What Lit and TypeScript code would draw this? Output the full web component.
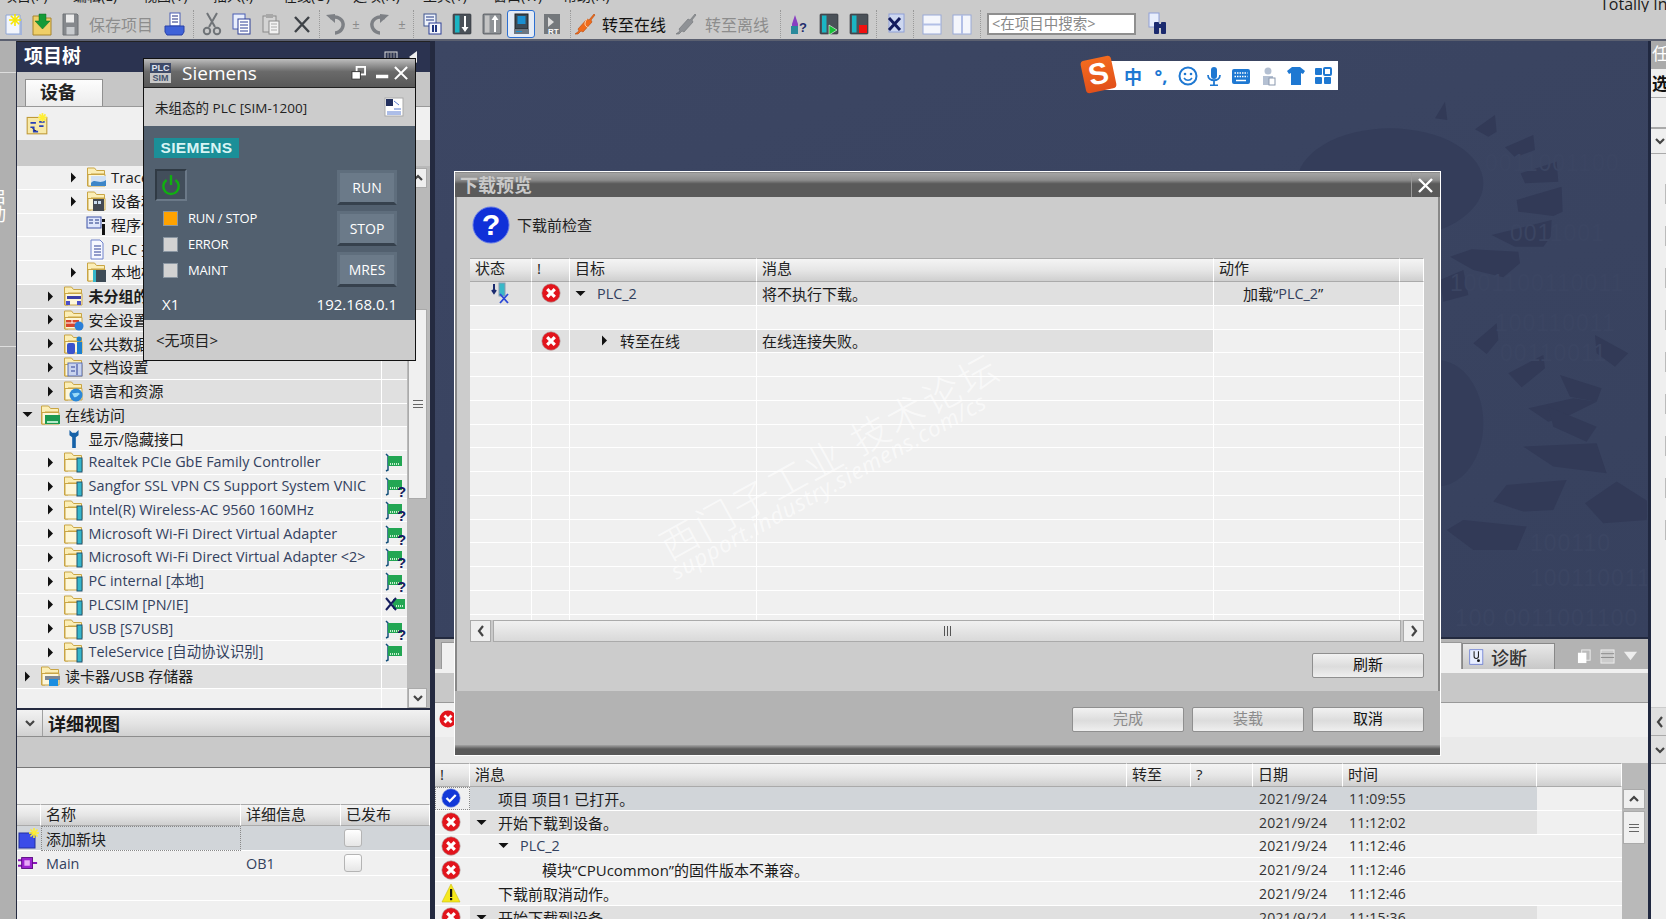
import { LitElement, html, css, svg } from "lit";
import { customElement } from "lit/decorators.js";

const ic = (c: any, s = 24, vb = 24) =>
  html`<svg width=${s} height=${s} viewBox="0 0 ${vb} ${vb}">${c}</svg>`;

const star = (x: number, y: number, r = 5, col = "#ffee33") => svg`
  <g stroke=${col} stroke-width="1.6">
    <line x1=${x - r} y1=${y} x2=${x + r} y2=${y} />
    <line x1=${x} y1=${y - r} x2=${x} y2=${y + r} />
    <line x1=${x - r * 0.7} y1=${y - r * 0.7} x2=${x + r * 0.7} y2=${y + r * 0.7} />
    <line x1=${x - r * 0.7} y1=${y + r * 0.7} x2=${x + r * 0.7} y2=${y - r * 0.7} />
  </g>`;

const device = (screen: string, body = "#4a5158") => svg`
  <rect x="3" y="2" width="18" height="20" rx="1" fill=${body} stroke="#2c3138" stroke-width=".6"/>
  <rect x="5" y="3.5" width="4.500" height="17" fill=${screen}/>`;

const tb = {
  new: ic(svg`<path d="M4 3h14v19H4z" fill="#f2f5fc" stroke="#8fa6d4"/><path d="M18 6l2 1v16H6v-1h12z" fill="#a3b4da"/>${star(13, 8, 6, "#f5e600")}`),
  open: ic(svg`<path d="M3 4h7l2 2h9v17H3z" fill="#efcf68" stroke="#a8862e"/><path d="M9 2h7v7h4l-7.500 8L5 9h4z" fill="#149a38" stroke="#0c6b22" stroke-width=".5"/>`),
  save: ic(svg`<path d="M5 2h14l1 1v20H5z" fill="#85888c" stroke="#6e7276"/><rect x="8" y="2.500" width="8" height="8" fill="#ececec"/><rect x="8.500" y="15" width="8" height="7.500" fill="#c9cccf"/>`),
  print: ic(svg`<rect x="8" y="1" width="10" height="13" fill="#fff" stroke="#4a5fb5"/><path d="M10 4h6M10 7h6M10 10h6" stroke="#1e2d80"/><path d="M3 14h19v6l-2 3H5l-2-3z" fill="#3f62d8" stroke="#2941a8"/>`),
  cut: ic(svg`<g fill="none" stroke="#707478" stroke-width="2"><path d="M7 1l8 14M17 1L9 15"/><circle cx="7" cy="19" r="3.200"/><circle cx="17" cy="19" r="3.200"/></g>`),
  copy: ic(svg`<rect x="3" y="2" width="12" height="15" fill="#e8eefc" stroke="#4a5fb5"/><rect x="8" y="7" width="12" height="15" fill="#fff" stroke="#2d3f95"/><path d="M10 10h8M10 13h8M10 16h8M10 19h8" stroke="#2d3f95"/>`),
  paste: ic(svg`<rect x="4" y="4" width="13" height="16" fill="#d4d4d4" stroke="#8a8a8a"/><rect x="7" y="2" width="7" height="4" fill="#a8a8a8"/><rect x="10" y="9" width="10" height="13" fill="#f2f2f2" stroke="#8a8a8a"/><path d="M12 12h6M12 15h6M12 18h6" stroke="#aaa"/>`),
  del: ic(svg`<path d="M5 5l14 15M19 5L5 20" stroke="#3e4247" stroke-width="2.400" fill="none"/>`),
  undo: ic(svg`<path d="M6 6c8-3 14 2 13 8s-7 7-8 7" stroke="#7d8085" stroke-width="3.400" fill="none"/><path d="M2 3l9-1v9z" fill="#7d8085"/>`),
  redo: ic(svg`<path d="M18 6c-8-3-14 2-13 8s7 7 8 7" stroke="#7d8085" stroke-width="3.400" fill="none"/><path d="M22 3l-9-1v9z" fill="#7d8085"/>`),
  dl0: ic(svg`<rect x="4" y="2" width="12" height="12" fill="#eef3fb" stroke="#41568f"/><path d="M6 5h8M6 8h8" stroke="#1f3580"/><rect x="9" y="11" width="12" height="11" fill="#f4f6fb" stroke="#2d3f95"/><rect x="12" y="13" width="2" height="7" fill="#1f3580"/><rect x="15" y="13" width="2" height="7" fill="#1f3580"/>`),
  dl: ic(svg`${device("#1bb5c4")}<path d="M14 4v11h-2.500l3.500 5 3.500-5H16V4z" fill="#fff"/>`),
  ul: ic(svg`${device("#c4c4c4", "#8e9296")}<path d="M15 3l-3.500 5H14v12h2V8h2.500z" fill="#fff"/>`),
  sel: ic(svg`<rect x="6" y="2" width="13" height="15" fill="#3b4a57" stroke="#222"/><rect x="8.500" y="4" width="8" height="8" fill="#1a8fd0"/><rect x="5" y="17" width="15" height="5" fill="#6c7680"/><rect x="7" y="19" width="6" height="1" fill="#1a8fd0"/>`),
  rt: ic(svg`<rect x="4" y="2" width="16" height="20" fill="#74787c"/><path d="M8 5l6 5-6 5z" fill="#dcdcdc"/><text x="8" y="21.500" font-size="8" font-weight="700" fill="#fff" font-family="Liberation Sans">RT</text>`),
  on: ic(svg`<path d="M21 2l-5 6-2-1-9 10 1 2-4 3 3 0 3-3 2 1 9-10-1-2 4-5z" fill="#f06b1c" stroke="#b84a0a" stroke-width=".6"/><path d="M14 7c-3 4-3 7 2 9" stroke="#ffd9b8" fill="none"/>`),
  off: ic(svg`<path d="M21 2l-5 6-2-1-9 10 1 2-4 3 3 0 3-3 2 1 9-10-1-2 4-5z" fill="#8f9296" stroke="#6e7276" stroke-width=".6"/>`),
  acc: ic(svg`<path d="M5 12l3-9 3 9v9H5z" fill="#8a3fc2"/><rect x="4" y="14" width="7" height="8" fill="#2a8a9c"/><text x="12" y="20" font-size="13" font-weight="700" fill="#1f2d6b" font-family="Liberation Sans">?</text>`),
  m1: ic(svg`${device("#1bb5c4")}<path d="M12 13l8 5-8 5z" fill="#18c038" stroke="#fff" stroke-width=".6"/>`),
  m2: ic(svg`${device("#1bb5c4")}<rect x="12" y="13" width="8" height="8" fill="#f01010"/>`),
  xx: ic(svg`<rect x="6" y="2" width="15" height="18" fill="#cdd7f0" stroke="#8fa0d8"/><path d="M6 6l11 12M17 6L6 18" stroke="#141c5e" stroke-width="3"/>`),
  split1: ic(svg`<rect x="4" y="3" width="18" height="19" fill="#f4f6fc" stroke="#9aaad8"/><rect x="4" y="11.500" width="18" height="2" fill="#b2bfe6"/>`),
  split2: ic(svg`<rect x="3" y="3" width="18" height="19" fill="#f4f6fc" stroke="#9aaad8"/><rect x="11" y="3" width="2" height="19" fill="#b2bfe6"/>`),
  find: ic(svg`<rect x="3" y="1" width="10" height="14" fill="#e8eefc" stroke="#8fa0d8"/><rect x="8" y="10" width="5" height="12" rx="1" fill="#1b2a6e"/><rect x="15" y="10" width="5" height="12" rx="1" fill="#1b2a6e"/><rect x="12" y="12" width="4" height="4" fill="#1b2a6e"/>`),
};

type TbItem = { w: number; i?: any; t?: string; dis?: boolean; sep?: boolean; sel?: boolean; pm?: boolean; search?: boolean };
const toolbar: TbItem[] = [
  { w: 28, i: tb.new }, { w: 28, i: tb.open }, { w: 28, i: tb.save },
  { w: 73, t: "保存项目", dis: true }, { w: 34, i: tb.print }, { w: 4, sep: true },
  { w: 34, i: tb.cut }, { w: 25, i: tb.copy }, { w: 34, i: tb.paste }, { w: 28, i: tb.del }, { w: 6, sep: true },
  { w: 28, i: tb.undo }, { w: 12, pm: true }, { w: 34, i: tb.redo }, { w: 12, pm: true }, { w: 10, sep: true },
  { w: 28, i: tb.dl0 }, { w: 32, i: tb.dl }, { w: 28, i: tb.ul }, { w: 30, i: tb.sel, sel: true }, { w: 31, i: tb.rt }, { w: 6, sep: true },
  { w: 24, i: tb.on }, { w: 75, t: "转至在线" }, { w: 28, i: tb.off }, { w: 75, t: "转至离线", dis: true }, { w: 10, sep: true },
  { w: 28, i: tb.acc }, { w: 32, i: tb.m1 }, { w: 28, i: tb.m2 }, { w: 7, sep: true },
  { w: 30, i: tb.xx }, { w: 6, sep: true }, { w: 30, i: tb.split1 }, { w: 32, i: tb.split2 }, { w: 4, sep: true },
  { w: 154, search: true }, { w: 44, i: tb.find },
];

const folder = (over: any) => ic(svg`
  <path d="M1.500 20V2h7l2 2.500h8V8H5v12z" fill="#fbeeb6" stroke="#c9a544"/>
  <path d="M2 20V8.500h17V20z" fill="#fdf7da" stroke="#c9a544"/>${over}`, 22, 22);
const ifFolder = folder(svg`<rect x="14" y="7" width="5" height="14" fill="#35b6c9" stroke="#20526e"/>`);

const tree: { lv: number; arrow?: "r" | "d"; icon: any; label: string; shade?: boolean; bold?: boolean; st?: string; lat?: boolean }[] = [
  { lv: 2, arrow: "r", icon: folder(svg`<rect x="5" y="10" width="15" height="10" fill="#cfe0f5"/><path d="M5 17c4-5 8 2 15-3v6H5z" fill="#3d86c8"/>`), label: "Trace" },
  { lv: 2, arrow: "r", icon: folder(svg`<rect x="7" y="9" width="11" height="12" fill="#444a52"/><rect x="8" y="11" width="3" height="3" fill="#cde"/><rect x="12" y="11" width="3" height="3" fill="#cde"/>`), label: "设备和网络" },
  { lv: 2, icon: ic(svg`<rect x="1" y="3" width="14" height="11" fill="#dfe6fb" stroke="#3d52a8"/><path d="M3 6h4M3 9h4M9 6h4M9 9h4" stroke="#1f3580"/><rect x="16" y="5" width="3" height="3" fill="#111"/><rect x="16" y="10" width="3" height="11" fill="#111"/>`, 22, 22), label: "程序信息" },
  { lv: 2, icon: ic(svg`<path d="M5 2h9l3 3v16H5z" fill="#f6f8ff" stroke="#6e82cc"/><path d="M8 8h7M8 11h7M8 14h7M8 17h7" stroke="#2d3f95"/>`, 22, 22), label: "PLC 报警文本列表" },
  { lv: 2, arrow: "r", icon: folder(svg`<rect x="9" y="9" width="11" height="12" fill="#3d4a55"/><rect x="7" y="9" width="3" height="12" fill="#35b6c9"/>`), label: "本地模块" },
  { lv: 1, arrow: "r", shade: true, bold: true, icon: folder(svg`<rect x="4" y="11" width="14" height="3" fill="#3b3fa8"/><rect x="3" y="16" width="4" height="4" fill="#4b4fc8"/><rect x="14" y="16" width="4" height="4" fill="#4b4fc8"/>`), label: "未分组的设备" },
  { lv: 1, arrow: "r", shade: true, icon: folder(svg`<rect x="3" y="11" width="13" height="7" fill="#d8452a"/><path d="M3 14h13M9 11v3" stroke="#fff"/><circle cx="16" cy="17" r="4.500" fill="#2a7ed8"/>`), label: "安全设置" },
  { lv: 1, arrow: "r", shade: true, icon: folder(svg`<rect x="4" y="10" width="8" height="11" rx="2" fill="#3a52cc"/><circle cx="16" cy="6" r="2.500" fill="#1b7fcf"/><rect x="14" y="9" width="5" height="12" fill="#1b7fcf"/>`), label: "公共数据" },
  { lv: 1, arrow: "r", shade: true, icon: folder(svg`<rect x="5" y="7" width="14" height="13" fill="#c9d4ee" stroke="#5a6fb5"/><path d="M8 11h4M8 15h4M14 8v11" stroke="#2d3f95"/>`), label: "文档设置" },
  { lv: 1, arrow: "r", shade: true, icon: folder(svg`<circle cx="13" cy="15" r="6.500" fill="#2a88d8"/><path d="M9 13c3 1 6-2 8 1-2 1-3 4-6 3z" fill="#9adbf8"/>`), label: "语言和资源" },
  { lv: 0, arrow: "d", shade: true, icon: folder(svg`<rect x="5" y="11" width="15" height="9" fill="#1c9950"/><rect x="7" y="17" width="11" height="2" fill="#b5e8c8"/>`), label: "在线访问" },
  { lv: 1, icon: ic(svg`<path d="M6 1v6l3 2v12h4V9l3-2V1l-3 3h-4z" fill="#1662a8"/>`, 20, 22), label: "显示/隐藏接口" },
  { lv: 1, arrow: "r", icon: ifFolder, label: "Realtek PCIe GbE Family Controller", st: "n", lat: true },
  { lv: 1, arrow: "r", icon: ifFolder, label: "Sangfor SSL VPN CS Support System VNIC", st: "q", lat: true },
  { lv: 1, arrow: "r", icon: ifFolder, label: "Intel(R) Wireless-AC 9560 160MHz", st: "q", lat: true },
  { lv: 1, arrow: "r", icon: ifFolder, label: "Microsoft Wi-Fi Direct Virtual Adapter", st: "q", lat: true },
  { lv: 1, arrow: "r", icon: ifFolder, label: "Microsoft Wi-Fi Direct Virtual Adapter <2>", st: "q", lat: true },
  { lv: 1, arrow: "r", icon: ifFolder, label: "PC internal [本地]", st: "q", lat: true },
  { lv: 1, arrow: "r", icon: ifFolder, label: "PLCSIM [PN/IE]", st: "x", lat: true },
  { lv: 1, arrow: "r", icon: ifFolder, label: "USB [S7USB]", st: "q", lat: true },
  { lv: 1, arrow: "r", icon: ifFolder, label: "TeleService [自动协议识别]", st: "n", lat: true },
  { lv: 0, arrow: "r", shade: true, icon: folder(svg`<rect x="5" y="11" width="15" height="4" fill="#7d8794"/><rect x="9" y="14" width="9" height="7" fill="#1b8ee0"/>`), label: "读卡器/USB 存储器" },
  { lv: 0, icon: "", label: "" },
];

const nic = (q: boolean) => ic(svg`<path d="M2 3l2 2v14l-2 1" stroke="#14507a" fill="none" stroke-width="1.500"/><rect x="4" y="5" width="14" height="10" fill="#22a653"/><path d="M6 13h9" stroke="#c8f0d0" stroke-width="2" stroke-dasharray="1 1"/>${q ? svg`<text x="13" y="22" font-size="15" font-weight="700" fill="#141c5e" font-family="Liberation Sans">?</text>` : ""}`, 22, 22);
const nicX = ic(svg`<rect x="9" y="5" width="12" height="10" fill="#22a653"/><path d="M12 12h7" stroke="#c8f0d0" stroke-width="2" stroke-dasharray="1 1"/><path d="M2 4l10 12M12 4L2 16" stroke="#141c5e" stroke-width="2"/>`, 22, 22);

const rightArrow = html`<svg width="7" height="11" viewBox="0 0 7 11"><path d="M1 .5l5 5-5 5z" fill="#111"/></svg>`;
const downArrow = html`<svg width="11" height="7" viewBox="0 0 11 7"><path d="M.5 1h10l-5 5z" fill="#111"/></svg>`;
const chev = (d: string) => html`<svg width="12" height="12" viewBox="0 0 12 12"><path d=${d} stroke="#444" stroke-width="2.200" fill="none"/></svg>`;
const CUP = "M2 8l4-4 4 4", CDOWN = "M2 4l4 4 4-4", CLEFT = "M8 1L4 6l4 5", CRIGHT = "M4 1l4 5-4 5";

const err = ic(svg`<circle cx="10" cy="10" r="9.200" fill="#e2141c" stroke="#a8a0a0" stroke-width=".6"/><path d="M6.200 6.200l7.600 7.600M13.800 6.200l-7.600 7.600" stroke="#fff" stroke-width="3.200"/>`, 20, 20);
const ok = ic(svg`<circle cx="10" cy="10" r="9.200" fill="#1238d8" stroke="#8a98d8" stroke-width=".6"/><path d="M5.500 10l3.200 3.200 6-6.200" stroke="#fff" stroke-width="2.300" fill="none"/>`, 20, 20);
const warn = ic(svg`<path d="M10 1l9 18H1z" fill="#f6e81e" stroke="#c8bc10" stroke-width=".6"/><rect x="9" y="6" width="2.200" height="8" fill="#111"/><rect x="9" y="15" width="2.200" height="2.200" fill="#111"/>`, 20, 20);

const logRows: { icon: any; lv: number; arrow?: boolean; msg: string; lat?: boolean; t: string; cls: string }[] = [
  { icon: ok, lv: 0, msg: "项目 项目1 已打开。", t: "11:09:55", cls: "sel" },
  { icon: err, lv: 0, arrow: true, msg: "开始下载到设备。", t: "11:12:02", cls: "shade" },
  { icon: err, lv: 1, arrow: true, msg: "PLC_2", lat: true, t: "11:12:46", cls: "" },
  { icon: err, lv: 2, msg: "模块“CPUcommon”的固件版本不兼容。", t: "11:12:46", cls: "" },
  { icon: warn, lv: 0, msg: "下载前取消动作。", t: "11:12:46", cls: "" },
  { icon: err, lv: 0, arrow: true, msg: "开始下载到设备。", t: "11:15:36", cls: "shade" },
];

const gearTeeth = [
  "285,235 315,185 322,240", "405,268 465,225 470,275 445,290", "495,322 580,285 585,330 525,352",
  "542,400 650,365 655,425 555,430", "530,480 665,440 668,515 640,528 535,515", "455,585 635,540 632,590 610,620 525,620",
  "330,650 395,628 535,635 540,670 490,712 400,690", "300,720 370,690 385,765 310,785",
  "400,910 470,850 475,900 440,942", "505,1000 610,945 615,985 545,1042", "565,1105 700,1075 770,1085 690,1125 625,1145",
  "660,1005 785,1045 770,1085 690,1070", "765,885 865,940 825,980 770,940", "625,1100 770,1160 740,1205 640,1160",
  "550,1220 770,1210 800,1300 640,1280", "460,1385 500,1335 680,1320 640,1410 550,1415",
  "735,1390 830,1325 925,1385 920,1440 790,1450", "320,1470 370,1440 560,1460 530,1530 400,1530",
];

@customElement("app-root")
export class AppRoot extends LitElement {
  static styles = css`
    :host { display: block; width: 1666px; height: 919px; overflow: hidden; position: relative;
      font-family: "Open Sans", "Noto Sans CJK SC", sans-serif; font-size: 15px; color: #1c1c1c; }
    * { box-sizing: border-box; }
    svg { display: block; flex: none; }
    .app { display: flex; flex-direction: column; height: 919px; background: #ccc; }

    .top { height: 41px; flex: none; background: #cbcbcb; border-bottom: 2px solid #5b6070; overflow: hidden; }
    .menu { height: 12px; display: flex; overflow: hidden; position: relative; padding-left: 3px; }
    .menu span { width: 70px; font-size: 14px; line-height: 16px; margin-top: -12px; flex: none; }
    .menu .taia { margin-left: auto; width: 66px; font-size: 16px; line-height: 20px; margin-top: -6px; white-space: nowrap; overflow: hidden; }
    .bar { display: flex; align-items: center; height: 31px; margin-top: -4px; }
    .ti { display: flex; align-items: center; justify-content: center; flex: none; height: 30px; }
    .ti.txt { font-size: 16px; justify-content: flex-start; padding-left: 5px; white-space: nowrap; color: #111; }
    .ti.dis { color: #8d8d8d; }
    .ti.sep::after { content: ""; height: 28px; border-left: 1px dotted #9a9a9a; }
    .ti.sel svg { border: 1px solid #2c6fd1; background: #e4ebf5; border-radius: 3px; box-sizing: content-box; padding: 1px; }
    .ti.pm { color: #8a8a8a; font-size: 13px; }
    .search { width: 149px; height: 22px; border: 2px solid #8f8f8f; background: #fff; font-size: 14.500px; line-height: 17px;
      padding-left: 3px; color: #888; margin-left: 5px; flex: none; white-space: nowrap; overflow: hidden; }

    .main { flex: 1; display: flex; min-height: 0; }
    .lstrip { width: 16px; flex: none; background: #b0b0b0; padding-top: 31px; overflow: hidden; }
    .ltab { height: 275px; border-top: 1px solid #ddd; border-bottom: 1px solid #ddd; padding-top: 114px; }
    .ltab span { writing-mode: vertical-rl; color: #fff; font-size: 18px; margin-left: -17px; display: block; }

    .left { width: 419px; flex: none; background: #242a40; padding: 0 5px 0 1px; display: flex; flex-direction: column; }
    .treehead { height: 31px; flex: none; background: #2b3350; color: #fff; font-size: 19px; font-weight: 700;
      padding-left: 7px; line-height: 29px; display: flex; border-top: 1px solid #222; }
    .treehead .tools { margin-left: auto; display: flex; align-items: center; gap: 8px; padding-right: 10px; }
    .tabs { height: 34px; flex: none; background: #c6c6c6; padding: 7px 0 0 8px; display: flex; }
    .tab { width: 78px; background: linear-gradient(#fdfdfd, #ececec); border: 1px solid #909090; border-bottom: 0; font-size: 18px; font-weight: 700;
      padding-left: 14px; line-height: 25px; color: #222; }
    .treebar { height: 34px; flex: none; background: #f0f0f0; display: flex; align-items: center; padding-left: 8px; border-top: 1px solid #999; }
    .treeband { height: 26px; flex: none; background: #c9c9c9; }
    .treebody { height: 542px; flex: none; display: flex; overflow: hidden; background: #f0f0f0; }
    .rows { flex: 1; min-width: 0; }
    .row { height: 23.75px; display: grid; grid-template-columns: 1fr 26px; border-bottom: 1px solid #fff; overflow: hidden; }
    .name { display: flex; align-items: center; background: #f0f0f0; white-space: nowrap; }
    .row.shade .name, .row.shade .stat { background: #e0e0e0; }
    .arrow { width: 18px; display: flex; justify-content: center; align-items: center; flex: none; }
    .name .ico { width: 29px; flex: none; display: flex; justify-content: center; }
    .name .lab { font-size: 15px; line-height: 22px; padding-left: 0; }
    .lab.lat { color: #33415e; font-size: 14.400px; }
    .lab.bold { font-weight: 700; }
    .stat { background: #f0f0f0; border-left: 1px solid #fff; display: flex; align-items: center; justify-content: center; }
    .vsb { width: 23px; flex: none; background: #b9b9b9; display: flex; flex-direction: column; padding: 2px 3px 0 1px; }
    .sbtn { height: 20px; flex: none; background: #efefef; border: 1px solid #aaa; display: flex; align-items: center; justify-content: center; }
    .sthumb { flex: none; height: 190px; margin-top: 121px; background: #f0f0f0; border: 1px solid #fff; outline: 1px solid #aaa; outline-offset: -1px;
      display: flex; align-items: center; justify-content: center; }
    .grip { width: 10px; height: 8px; border-top: 1px solid #666; border-bottom: 1px solid #666; position: relative; }
    .grip::after { content: ""; display: block; height: 1px; background: #666; margin-top: 2.500px; }
    .vsb .sp { flex: 1; }

    .detail { flex: 1; background: #f0f0f0; margin-top: 2px; display: flex; flex-direction: column; min-height: 0; overflow: hidden; }
    .dhead { height: 27px; flex: none; display: flex; align-items: center; background: linear-gradient(#f2f2f2, #e2e2e2 55%, #d0d0d0);
      border-bottom: 1px solid #8d8d8d; font-size: 18px; font-weight: 700; color: #1a1a1a; }
    .dhead .c { width: 26px; border-right: 1px solid #a0a0a0; height: 100%; display: flex; align-items: center; justify-content: center; margin-right: 5px; }
    .dband { height: 31px; flex: none; background: #c9c9c9; border-bottom: 1px solid #777; }
    .dgap { height: 36px; flex: none; }
    .grid4 { display: grid; grid-template-columns: 24px 200px 100px 1fr; }
    .hdr > div { height: 22px; background: linear-gradient(#f4f4f4, #e6e6e6 50%, #cfcfcf); border-top: 1px solid #aaa; border-bottom: 1px solid #aaa; border-right: 1px solid #fff;
      padding-left: 5px; line-height: 19px; font-size: 15px; color: #222; white-space: nowrap; overflow: hidden; }
    .drow > div { height: 25px; border-bottom: 1px solid #fff; display: flex; align-items: center; padding-left: 5px; font-size: 15px; }
    .drow > .first { padding-left: 1px; }
    .drow.sel > div { background: #d1d5d9; }
    .drow.sel .focus { outline: 1px dotted #888; outline-offset: -1px; }
    .drow .lt { color: #33415e; font-size: 14.400px; }
    .chk { width: 18px; height: 18px; border: 1px solid #b4b4b4; border-radius: 3px; background: linear-gradient(#fff, #e6e6e6); margin-left: -2px; }

    .center { flex: 1; display: flex; flex-direction: column; min-width: 0; }
    .canvas { height: 596px; flex: none; background: linear-gradient(160deg, #3c4663, #37415e); overflow: hidden; position: relative; }
    .canvas svg { position: absolute; left: 0; top: 0; }
    .bin { font-family: "Liberation Sans", sans-serif; font-size: 23px; fill: #3b4562; letter-spacing: 1px; }
    .tabrow { height: 32px; flex: none; background: #b3b3b3; border-top: 2px solid #232a3f; display: flex; align-items: flex-end; padding-left: 6px; }
    .tactive { width: 1021px; height: 27px; background: #f0f0f0; border: 1px solid #999; border-bottom: 0; }
    .tdiag { width: 93px; height: 26px; background: linear-gradient(#e8e8e8, #c8c8c8); border: 1px solid #888; border-bottom: 0; display: flex; align-items: center; gap: 6px; padding-left: 6px;
      font-size: 18px; font-weight: 500; color: #333; }
    .ttools { margin-left: 22px; display: flex; gap: 8px; align-items: center; height: 26px; }
    .lstripe { height: 4px; flex: none; background: #f0f0f0; }
    .lband { height: 30px; flex: none; background: #c8c8c8; border-bottom: 1px solid #999; }
    .lfilter { height: 34px; flex: none; background: #f0f0f0; padding: 6px 0 0 3px; }
    .lgap { height: 26px; flex: none; background: #eaeaea; }
    .loggrid { flex: 1; display: flex; min-height: 0; overflow: hidden; background: #f0f0f0; }
    .logt { flex: 1; min-width: 0; }
    .lc { display: grid; grid-template-columns: 35px 657px 64px 62px 90px 194px 1fr; }
    .lc.hdr > div { height: 24px; padding-left: 5px; line-height: 20px; }
    .lr { height: 23.75px; border-bottom: 1px solid #fff; overflow: hidden; }
    .lr > div { display: flex; align-items: center; height: 100%; white-space: nowrap; padding-left: 6px; font-size: 15px; }
    .lr.sel > div:not(:last-child) { background: #d1d5d9; }
    .lr.shade > div:not(:last-child) { background: #e0e0e0; }
    .lr > .i { padding-left: 6px; background: #f0f0f0 !important; }
    .lr.sel > .i { outline: 1px dotted #888; outline-offset: -1px; }
    .lr .num { font-size: 14px; color: #333; letter-spacing: .2px; }
    .lr .ar { width: 16px; margin: 0 6px 0 4px; flex: none; display: flex; }
    .lsb { width: 26px; flex: none; padding: 26px 3px 0 1px; background: #b9b9b9; display: flex; flex-direction: column; gap: 2px; }
    .lsb .sthumb { height: 33px; margin-top: 0; }

    .rstrip { width: 18px; flex: none; background: #202840; padding-left: 3px; display: flex; flex-direction: column; }
    .rs { background: #efefef; overflow: hidden; width: 15px; }
    .rs1 { height: 28px; background: #aaa; color: #fff; font-size: 17px; padding-left: 1px; line-height: 26px; white-space: nowrap; }
    .rs2 { height: 29px; color: #111; font-size: 17px; font-weight: 700; padding-left: 1px; line-height: 29px; border-bottom: 1px solid #aaa; white-space: nowrap; }
    .rs3 { height: 31px; border-bottom: 2px solid #aaa; }
    .rs4 { height: 25px; border-bottom: 1px solid #aaa; display: flex; align-items: center; padding-left: 3px; }
    .rs5 { height: 554px; border-bottom: 1px solid #ccc; display: flex; flex-direction: column; align-items: flex-end; gap: 22px; padding-top: 30px; }
    .rs5 i { width: 1px; height: 20px; background: #bbb; display: block; }
    .rs6 { height: 28px; display: flex; align-items: center; padding-left: 3px; border-bottom: 1px solid #aaa; background: #e0e0e0; }
    .rs7 { flex: 1; }

    .sim { position: absolute; left: 143px; top: 58px; width: 273px; height: 303px; border: 1px solid #111; display: flex; flex-direction: column; background: #ccc; }
    .simtitle { height: 29px; flex: none; background: linear-gradient(#bdbdbd, #6a6a6a 45%, #585858); border-bottom: 1px solid #222; display: flex; align-items: center; color: #fff; font-size: 19px; padding-left: 6px; }
    .simtitle .logo { width: 21px; height: 20px; background: #3e4a68; color: #dfe3ee; font-size: 9px; font-weight: 700; line-height: 10px; text-align: center; margin-right: 11px; font-family: "Liberation Sans"; }
    .simtitle .logo b { display: block; background: #c8c8c8; color: #44526e; }
    .simtitle .tools { margin-left: auto; display: flex; align-items: center; gap: 4px; padding-right: 6px; }
    .simtitle .tools .gapr { margin-right: 6px; }
    .simsub { height: 38px; flex: none; display: flex; align-items: center; justify-content: space-between; padding: 0 11px; font-size: 13.500px; color: #222; }
    .simbody { height: 194px; flex: none; background: #52606f; display: grid; grid-template-columns: 1fr 60px; padding: 12px 18px 0 10px; color: #fff; position: relative; }
    .sleft { display: flex; flex-direction: column; }
    .slogo { width: 85px; height: 20px; background: #1b8f98; color: #d8f4f4; font-family: "Liberation Sans"; font-weight: 700; font-size: 15.500px; line-height: 20px; text-align: center; letter-spacing: .3px; }
    .pwr { width: 32px; height: 32px; margin: 11px 0 0 1px; background: #424e5b; border: 2px solid; border-color: #303a44 #6b7988 #6b7988 #303a44; display: flex; align-items: center; justify-content: center; }
    .led { display: flex; align-items: center; gap: 10px; height: 26px; font-size: 13px; margin-left: 9px; letter-spacing: -.2px; }
    .led i { width: 15px; height: 15px; background: #d2d2d2; border: 1px solid #8a96a2; display: block; }
    .led i.on { background: #ffa200; }
    .leds { margin-top: 4px; }
    .sright { display: flex; flex-direction: column; gap: 6px; padding-top: 32px; margin-top: 0; }
    .sb { height: 35px; background: #6b7a89; border: 3px solid #5f6e7d; border-bottom-color: #36414d; color: #fff; font-size: 14px; text-align: center; line-height: 29px; }
    .siminfo { position: absolute; left: 18px; right: 18px; bottom: 6px; display: flex; justify-content: space-between; font-size: 15px; }
    .simfoot { height: 38px; padding: 0 12px; display: flex; align-items: center; font-size: 15px; color: #222; }

    .dlg { position: absolute; left: 454px; top: 171px; width: 987px; height: 585px; border: 1px solid #fff; background: #ccc; display: flex; flex-direction: column; padding: 1px 2px 0; box-shadow: inset 0 0 0 2px #888; }
    .dt { height: 24px; flex: none; background: linear-gradient(#a4a4a4, #8c8c8c 30%, #5a5a5a 45%); margin: 0 -2px; display: flex; padding-left: 5px; align-items: center; justify-content: space-between;
      color: #c9c9c9; font-size: 18px; font-weight: 700; line-height: 22px; }
    .dt .x { width: 27px; height: 100%; border-left: 1px solid #999; display: flex; align-items: center; justify-content: center; margin-right: 2px; }
    .dq { height: 61px; flex: none; display: flex; align-items: center; gap: 7px; padding: 0 0 6px 15px; font-size: 15px; color: #222; }
    .tbl { margin-left: 13px; width: 954px; position: relative; overflow: hidden; flex: none; }
    .dc { display: grid; grid-template-columns: 62px 38px 187px 457px 186px 1fr; }
    .dc.hdr > div { height: 24px; padding-left: 5px; line-height: 19px; }
    .dr { height: 23.75px; }
    .dr > div { border-bottom: 1px solid #fff; border-right: 1px solid #fff; background: #f0f0f0; display: flex; align-items: center; font-size: 15px; padding-left: 5px; overflow: hidden; white-space: nowrap; }
    .dr > .hl { background: #e0e0e0; }
    .dr .cen { justify-content: center; padding: 0; }
    .lt2 { color: #33415e; font-size: 14.400px; }
    .wm { position: absolute; color: rgba(255,255,255,.6); transform-origin: left bottom; transform: rotate(-29deg); white-space: nowrap; pointer-events: none; }
    .wm1 { left: 205px; top: 258px; font-size: 38px; font-weight: 300; letter-spacing: 3px; }
    .wm2 { left: 210px; top: 297px; font-size: 22.500px; font-style: italic; letter-spacing: 1px; }
    .tblbody { height: 338px; overflow: hidden; }
    .hsb { height: 22px; margin-left: 13px; width: 954px; flex: none; display: flex; gap: 2px; background: #c9c9c9; }
    .hsb .b { width: 21px; background: #efefef; border: 1px solid #aaa; display: flex; align-items: center; justify-content: center; flex: none; }
    .hsb .t { flex: 1; background: linear-gradient(#f0f0f0, #d9d9d9); border: 1px solid #aaa; display: flex; align-items: center; justify-content: center; }
    .vgrip { width: 7px; height: 10px; border-left: 1px solid #555; border-right: 1px solid #555; position: relative; }
    .vgrip::after { content: ""; position: absolute; left: 2px; top: 0; width: 1px; height: 10px; background: #555; }
    .dref { height: 49px; flex: none; display: flex; justify-content: flex-end; align-items: flex-start; padding: 11px 14px 0 0; }
    .dfoot { height: 54px; flex: none; margin: 0 -2px; background: #b3b3b3; display: flex; justify-content: flex-end; gap: 8px; padding: 16px 16px 0 0; }
    .dbtn { width: 112px; height: 25px; border: 1px solid #8f8f8f; border-radius: 2px; background: linear-gradient(#f2f2f2, #dcdcdc 55%, #efefef); text-align: center; line-height: 20px; font-size: 15px; color: #111; }
    .dbtn.dis { color: #8c8c8c; }
    .dend { flex: 1; margin: 0 -2px; background: linear-gradient(#a4a4a4, #5a5a5a 40%); }

    .sg { position: absolute; left: 1102px; top: 61px; width: 236px; height: 29px; background: #fff; display: flex; align-items: center; color: #1e78d2; }
    .sg .s { position: absolute; left: -19px; top: -3px; width: 31px; height: 33px; border-radius: 4px; background: linear-gradient(#f26a1e, #e2501a); transform: rotate(-12deg);
      color: #fff; font: 700 30px/32px "Liberation Sans", sans-serif; text-align: center; }
    .sg .it { position: absolute; top: 4px; height: 21px; display: flex; align-items: center; justify-content: center; width: 22px; font-size: 18px; font-weight: 700; }
    .sg .a { left: 20px; } .sg .b { left: 48px; } .sg .c { left: 75px; } .sg .d { left: 101px; } .sg .e { left: 128px; }
    .sg .f { left: 156px; } .sg .g { left: 183px; } .sg .h { left: 210px; }
  `;

  render() {
    return html`
      <div class="app">
        ${this.renderTop()}
        <div class="main">
          <div class="lstrip"><div class="ltab"><span>启动</span></div></div>
          ${this.renderLeft()}
          ${this.renderCenter()}
          ${this.renderRight()}
        </div>
      </div>
      ${this.renderSim()}
      ${this.renderDialog()}
      ${this.renderSogou()}
    `;
  }

  renderTop() {
    return html`<div class="top">
      <div class="menu">
        ${["项目(P)", "编辑(E)", "视图(V)", "插入(I)", "在线(O)", "选项(N)", "工具(T)", "窗口(W)", "帮助(H)"].map((m) => html`<span>${m}</span>`)}
        <span class="taia">Totally Integrated</span>
      </div>
      <div class="bar">
        ${toolbar.map((t) => {
          if (t.search) return html`<div class="ti" style="width:${t.w}px"><div class="search">&lt;在项目中搜索&gt;</div></div>`;
          const cls = ["ti", t.t ? "txt" : "", t.dis ? "dis" : "", t.sep ? "sep" : "", t.sel ? "sel" : "", t.pm ? "pm" : ""].join(" ");
          return html`<div class=${cls} style="width:${t.w}px">${t.i ?? t.t ?? ""}${t.pm ? "±" : ""}</div>`;
        })}
      </div>
    </div>`;
  }

  renderLeft() {
    return html`<div class="left">
      <div class="treehead">项目树
        <div class="tools">
          ${ic(svg`<rect x="1" y="2" width="12" height="11" fill="none" stroke="#ddd"/><path d="M4 2v11M7 2v11M10 2v11" stroke="#999"/>`, 14, 14)}
          ${ic(svg`<path d="M11 1v12L3 7z" fill="#eee"/>`, 14, 14)}
        </div>
      </div>
      <div class="tabs"><div class="tab">设备</div></div>
      <div class="treebar">
        ${ic(svg`<rect x="2" y="5" width="18" height="15" fill="#f7e9a8" stroke="#c09a38"/><path d="M5 10h5M5 14h3v4h4M13 9h5M13 13h4" stroke="#2840b8" stroke-width="1.500"/>${star(16, 5, 4)}`, 24, 22)}
      </div>
      <div class="treeband"></div>
      <div class="treebody">
        <div class="rows">
          ${tree.map((r) => html`<div class="row ${r.shade ? "shade" : ""}">
            <div class="name" style="padding-left:${r.lv * 22.5 + (r.lv ? 2 : 1)}px">
              <div class="arrow">${r.arrow === "r" ? rightArrow : r.arrow === "d" ? downArrow : ""}</div>
              <div class="ico">${r.icon}</div>
              <div class="lab ${r.lat ? "lat" : ""} ${r.bold ? "bold" : ""}">${r.label}</div>
            </div>
            <div class="stat">${r.st === "n" ? nic(false) : r.st === "q" ? nic(true) : r.st === "x" ? nicX : ""}</div>
          </div>`)}
        </div>
        <div class="vsb">
          <div class="sbtn">${chev(CUP)}</div>
          <div class="sthumb"><div class="grip"></div></div>
          <div class="sp"></div>
          <div class="sbtn">${chev(CDOWN)}</div>
        </div>
      </div>
      <div class="detail">
        <div class="dhead"><div class="c">${chev(CDOWN)}</div>详细视图</div>
        <div class="dband"></div>
        <div class="dgap"></div>
        <div class="grid4 hdr"><div></div><div>名称</div><div>详细信息</div><div>已发布</div></div>
        <div class="grid4 drow sel">
          <div class="first">${ic(svg`<rect x="1" y="6" width="16" height="15" fill="#3b4de8" stroke="#2530a0"/>${star(16, 6, 5)}`, 22, 22)}</div>
          <div class="focus">添加新块</div><div></div><div><div class="chk"></div></div>
        </div>
        <div class="grid4 drow">
          <div class="first">${ic(svg`<path d="M0 8h5M0 14h5M15 11h6" stroke="#8a16b8" stroke-width="2"/><rect x="4" y="5" width="12" height="12" fill="#9c22d0" stroke="#5a0a80"/><rect x="7" y="8" width="6" height="6" fill="#e8a8f8"/>`, 20, 22)}</div>
          <div class="lt">Main</div><div class="lt">OB1</div><div><div class="chk"></div></div>
        </div>
        <div class="grid4 drow"><div></div><div></div><div></div><div></div></div>
      </div>
    </div>`;
  }

  renderCenter() {
    return html`<div class="center">
      <div class="canvas">
        <svg width="1212" height="596" viewBox="0 0 1212 596">
          <g transform="translate(905,-1) scale(.3333)">
            <ellipse cx="150" cy="430" rx="280" ry="165" fill="#343d5a"/>
            <ellipse cx="290" cy="1150" rx="140" ry="190" fill="#343d5a"/>
            ${gearTeeth.map((p) => svg`<polygon points=${p} fill="#323a57"/>`)}
          </g>
          <text class="bin" x="1050" y="130">0011001100</text>
          <text class="bin" x="1075" y="200">0011001</text>
          <text class="bin" x="1015" y="250">1001100110011</text>
          <text class="bin" x="1060" y="290">100110011</text>
          <text class="bin" x="1065" y="320">00110011</text>
          <text class="bin" x="1095" y="510">100110</text>
          <text class="bin" x="1095" y="545">1001100110</text>
          <text class="bin" x="1020" y="585">100  0011001100</text>
        </svg>
      </div>
      <div class="tabrow">
        <div class="tactive"></div>
        <div class="tdiag">${ic(svg`<rect x="1" y="1" width="18" height="20" fill="#e8eeff" stroke="#5a6fd0"/><path d="M7 3v7a3 3 0 0 0 6 0V3" stroke="#222" fill="none" stroke-width="1.500"/><circle cx="13" cy="16" r="2" fill="#111"/>`, 16, 22)}诊断</div>
        <div class="ttools">
          ${ic(svg`<rect x="5" y="1" width="9" height="11" fill="#bbb" stroke="#eee"/><rect x="1" y="4" width="9" height="11" fill="#fff"/>`, 15, 16)}
          ${ic(svg`<rect x="1" y="1" width="14" height="14" fill="#ccc" stroke="#eee"/><path d="M1 5h14M1 9h14" stroke="#888"/>`, 15, 16)}
          ${ic(svg`<path d="M1 3h14l-7 9z" fill="#eee"/>`, 15, 16)}
        </div>
      </div>
      <div class="lstripe"></div>
      <div class="lband"></div>
      <div class="lfilter">${ic(svg`<circle cx="10" cy="10" r="8.500" fill="#e2141c"/><path d="M6.500 6.500l7 7M13.500 6.500l-7 7" stroke="#fff" stroke-width="2.800"/>`, 20, 20)}</div>
      <div class="lgap"></div>
      <div class="loggrid">
        <div class="logt">
          <div class="lc hdr"><div>!</div><div>消息</div><div>转至</div><div>?</div><div>日期</div><div>时间</div><div></div></div>
          ${logRows.map((r) => html`<div class="lc lr ${r.cls}">
            <div class="i">${r.icon}</div>
            <div style="padding-left:${r.lv * 22 + (r.arrow ? 2 : 28)}px">
              ${r.arrow ? html`<div class="ar">${downArrow}</div>` : ""}
              <span class=${r.lat ? "lt2" : ""}>${r.msg}</span>
            </div>
            <div></div><div></div>
            <div class="num">2021/9/24</div><div class="num">${r.t}</div><div></div>
          </div>`)}
        </div>
        <div class="lsb">
          <div class="sbtn">${chev(CUP)}</div>
          <div class="sthumb"><div class="grip"></div></div>
        </div>
      </div>
    </div>`;
  }

  renderRight() {
    return html`<div class="rstrip">
      <div class="rs rs1">任务</div>
      <div class="rs rs2">选</div>
      <div class="rs rs3"></div>
      <div class="rs rs4">${chev(CDOWN)}</div>
      <div class="rs rs5"><i></i><i></i><i></i><i></i><i></i><i></i><i></i><i></i><i></i></div>
      <div class="rs rs6">${chev(CLEFT)}</div>
      <div class="rs rs6">${chev(CDOWN)}</div>
      <div class="rs rs7"></div>
    </div>`;
  }

  renderSim() {
    const leds: [string, boolean][] = [["RUN / STOP", true], ["ERROR", false], ["MAINT", false]];
    return html`<div class="sim">
      <div class="simtitle">
        <div class="logo">PLC<b>SIM</b></div>Siemens
        <div class="tools">
          <div class="gapr">${ic(svg`<rect x="6" y="1" width="9" height="8" fill="none" stroke="#fff" stroke-width="2"/><rect x="1" y="6" width="9" height="8" fill="#fff" stroke="#333"/>`, 15, 16)}</div>
          ${ic(svg`<rect x="0" y="10" width="14" height="4" fill="#fff"/>`, 14, 16)}
          ${ic(svg`<path d="M1 1l13 13M14 1L1 14" stroke="#fff" stroke-width="2.200"/>`, 15, 16)}
        </div>
      </div>
      <div class="simsub">未组态的 PLC [SIM-1200]
        ${ic(svg`<rect x="1" y="1" width="18" height="18" fill="#fff" stroke="#aaa"/><rect x="2" y="2" width="7" height="7" fill="#23305e"/><path d="M10 4l5 4M10 12h7M3 15h14M3 17h14" stroke="#5b7dd0"/>`, 20, 20)}
      </div>
      <div class="simbody">
        <div class="sleft">
          <div class="slogo">SIEMENS</div>
          <div class="pwr">${ic(svg`<path d="M6 5.500a7 7 0 1 0 8 0" fill="none" stroke="#10b010" stroke-width="2.200"/><path d="M10 1v9" stroke="#10b010" stroke-width="2.200"/>`, 22, 20)}</div>
          <div class="leds">${leds.map(([l, on]) => html`<div class="led"><i class=${on ? "on" : ""}></i>${l}</div>`)}</div>
        </div>
        <div class="sright"><div class="sb">RUN</div><div class="sb">STOP</div><div class="sb">MRES</div></div>
        <div class="siminfo"><span>X1</span><span>192.168.0.1</span></div>
      </div>
      <div class="simfoot">&lt;无项目&gt;</div>
    </div>`;
  }

  renderDialog() {
    const empty = Array.from({ length: 12 });
    return html`<div class="dlg">
      <div class="dt">下载预览
        <div class="x">${ic(svg`<path d="M1 1l13 13M14 1L1 14" stroke="#fff" stroke-width="2.400"/>`, 15, 15)}</div>
      </div>
      <div class="dq">
        ${ic(svg`<circle cx="20" cy="20" r="19" fill="#1030d8"/><circle cx="20" cy="20" r="19" fill="none" stroke="#6a7fe8"/><text x="20" y="31" text-anchor="middle" font-size="32" font-weight="700" fill="#fff" font-family="Liberation Sans">?</text>`, 38, 40)}
        下载前检查
      </div>
      <div class="tbl">
        <div class="dc hdr"><div>状态</div><div>!</div><div>目标</div><div>消息</div><div>动作</div><div></div></div>
        <div class="tblbody">
          <div class="dc dr">
            <div class="hl cen">${ic(svg`<path d="M4 2v9M2 8l2 3 2-3" stroke="#1b2a6e" stroke-width="2" fill="none"/><rect x="9" y="1" width="6" height="13" fill="#39b8c8" stroke="#8a9ab0"/><path d="M10 12l8 9M18 12l-8 9" stroke="#2a48d8" stroke-width="1.800"/>`, 22, 22)}</div>
            <div class="hl cen">${err}</div>
            <div class="hl"><div class="ar0">${downArrow}</div><span class="lt2" style="margin-left:11px">PLC_2</span></div>
            <div class="hl">将不执行下载。</div>
            <div class="hl" style="padding-left:29px">加载“<span class="lt2">PLC_2</span>”</div>
            <div></div>
          </div>
          <div class="dc dr"><div></div><div></div><div></div><div></div><div></div><div></div></div>
          <div class="dc dr">
            <div></div>
            <div class="hl cen">${err}</div>
            <div class="hl" style="padding-left:31px">${rightArrow}<span style="margin-left:12px">转至在线</span></div>
            <div class="hl">在线连接失败。</div>
            <div></div><div></div>
          </div>
          ${empty.map(() => html`<div class="dc dr"><div></div><div></div><div></div><div></div><div></div><div></div></div>`)}
        </div>
        <div class="wm wm1">西门子工业 技术论坛</div>
        <div class="wm wm2">support.industry.siemens.com/cs</div>
      </div>
      <div class="hsb">
        <div class="b">${chev(CLEFT)}</div>
        <div class="t"><div class="vgrip"></div></div>
        <div class="b">${chev(CRIGHT)}</div>
      </div>
      <div class="dref"><div class="dbtn">刷新</div></div>
      <div class="dfoot">
        <div class="dbtn dis">完成</div><div class="dbtn dis">装载</div><div class="dbtn">取消</div>
      </div>
      <div class="dend"></div>
    </div>`;
  }

  renderSogou() {
    const B = "#1e78d2";
    return html`<div class="sg">
      <div class="s">S</div>
      <div class="it a">中</div>
      <div class="it b">°,</div>
      <div class="it c">${ic(svg`<circle cx="10" cy="10" r="8.500" fill="none" stroke=${B} stroke-width="2"/><circle cx="7" cy="8" r="1.300" fill=${B}/><circle cx="13" cy="8" r="1.300" fill=${B}/><path d="M6 12c2 3 6 3 8 0" fill="none" stroke=${B} stroke-width="1.500"/>`, 20, 20)}</div>
      <div class="it d">${ic(svg`<rect x="7" y="1" width="6" height="12" rx="3" fill=${B}/><path d="M4 9c0 7 12 7 12 0M10 15v4M6 19.500h8" fill="none" stroke=${B} stroke-width="1.800"/>`, 20, 20)}</div>
      <div class="it e">${ic(svg`<rect x="1" y="3" width="18" height="15" rx="2" fill=${B}/><path d="M3.500 7h13M3.500 10.500h13" stroke="#fff" stroke-width="1.500" stroke-dasharray="1.500 1"/><path d="M5 14.500h10" stroke="#fff" stroke-width="1.500"/>`, 20, 20)}</div>
      <div class="it f">${ic(svg`<circle cx="9" cy="5" r="3.500" fill="#b4c0d2"/><path d="M4 10h10v9H4z" fill="#b4c0d2"/><rect x="10" y="12" width="6" height="7" fill="#fff" stroke="#8a98ae"/>`, 20, 20)}</div>
      <div class="it g">${ic(svg`<path d="M6 1h8l5 4-2 3-2-1v12H5V7L3 8 1 5z" fill=${B}/>`, 20, 20)}</div>
      <div class="it h">${ic(svg`<rect x="2" y="2" width="7" height="7" rx="1" fill=${B}/><rect x="11" y="2" width="7" height="7" rx="1" fill="none" stroke=${B} stroke-width="2"/><rect x="2" y="11" width="7" height="7" rx="1" fill=${B}/><rect x="11" y="11" width="7" height="7" rx="1" fill=${B}/>`, 20, 20)}</div>
    </div>`;
  }
}
